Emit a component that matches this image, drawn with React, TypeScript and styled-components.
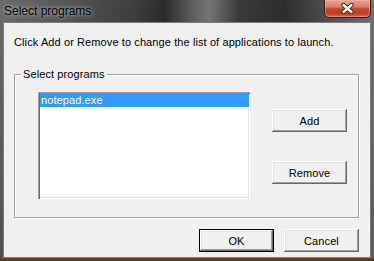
import styled, { createGlobalStyle } from 'styled-components';

const GlobalStyle = createGlobalStyle`
  html, body {
    margin: 0;
    padding: 0;
  }
  body {
    font-family: "Liberation Sans", Arial, sans-serif;
    background: #1c1c1c;
  }
  #root {
    width: 374px;
    height: 261px;
  }
`;

const Window = styled.div`
  width: 374px;
  height: 261px;
  box-sizing: border-box;
  padding: 0 3px 3px 3px;
  display: flex;
  flex-direction: column;
  background:
    linear-gradient(to top, #4a3414 0, #6b4c1f 3px, transparent 3px),
    linear-gradient(to bottom, rgba(255, 255, 255, 0.08), rgba(0, 0, 0, 0.15)),
    linear-gradient(90deg, #5e5e5e 0%, #474747 18%, #2e2e2e 36%, #1a1a1a 44%, #555 52%, #6a6a6a 56%, #2a2a2a 64%, #1c1c1c 76%, #3c3c3c 86%, #666 100%);
`;

const TitleBar = styled.div`
  height: 22px;
  display: flex;
  align-items: flex-start;
  justify-content: space-between;
`;

const Title = styled.span`
  padding-left: 1px;
  font-size: 12px;
  line-height: 23px;
  color: #000;
  text-shadow: 0 0 6px rgba(255, 255, 255, 0.55), 0 0 3px rgba(255, 255, 255, 0.45);
`;

const CloseButton = styled.div`
  width: 47px;
  height: 18px;
  box-sizing: border-box;
  display: flex;
  align-items: center;
  justify-content: center;
  border: 1px solid #3a1610;
  border-top: none;
  border-radius: 0 0 5px 5px;
  background: linear-gradient(to bottom, #e6a28f 0%, #d98068 40%, #c2482b 52%, #c03e22 78%, #d8664a 100%);
  box-shadow: inset 0 0 0 1px rgba(255, 190, 170, 0.45);
`;

const Client = styled.div`
  flex: 1;
  display: flex;
  flex-direction: column;
  padding: 0 11px 0 10px;
  background: #f0f0f0;
  border: 1px solid #7c7c7c;
  font-size: 11px;
  letter-spacing: 0.1px;
  color: #000;
`;

const Instruction = styled.div`
  margin-top: 13px;
  line-height: 13px;
  white-space: nowrap;
`;

const GroupBox = styled.fieldset`
  margin: 19px 0 0 0;
  padding: 11px 11px 18px 6px;
  min-width: 0;
  display: flex;
  border: 1px solid #a0a0a0;
  box-shadow: 1px 1px 0 #fff, inset 1px 1px 0 #fff;
`;

const GroupLabel = styled.legend`
  padding: 0 2px;
  line-height: 13px;
  background: #f0f0f0;
`;

const ListBox = styled.div`
  margin-left: 17px;
  width: 212px;
  height: 107px;
  box-sizing: border-box;
  padding: 1px 1px 0 2px;
  background: #fff;
  box-shadow: inset 1px 1px 0 #a0a0a0, inset 2px 2px 0 #696969, inset -1px -1px 0 #fff, inset -2px -2px 0 #e3e3e3;
`;

const ListItem = styled.div<{ $selected?: boolean }>`
  height: 14px;
  line-height: 14px;
  padding-left: 1px;
  background: ${(p) => (p.$selected ? '#3399ff' : 'transparent')};
  color: ${(p) => (p.$selected ? '#fff' : '#000')};
`;

const ButtonColumn = styled.div`
  display: flex;
  flex-direction: column;
  gap: 29px;
  margin-left: 22px;
  padding-top: 17px;
`;

const PushButton = styled.button<{ $default?: boolean }>`
  width: 75px;
  height: 23px;
  padding: 0;
  font-family: "Liberation Sans", Arial, sans-serif;
  font-size: 11px;
  letter-spacing: 0.1px;
  color: #000;
  background: #f0f0f0;
  border: ${(p) => (p.$default ? '1px solid #000' : 'none')};
  box-shadow: inset -1px -1px 0 #696969, inset 1px 1px 0 #fff, inset -2px -2px 0 #a0a0a0, inset 2px 2px 0 #e3e3e3;
`;

const Footer = styled.div`
  display: flex;
  justify-content: flex-end;
  gap: 10px;
  margin-top: 11px;
`;

const CloseIcon = () => (
  <svg width="13" height="11" viewBox="0 0 13 11">
    <path d="M2.5 2 L10.5 9 M10.5 2 L2.5 9" stroke="#3a1a12" strokeWidth="4.2" strokeLinecap="round" />
    <path d="M2.5 2 L10.5 9 M10.5 2 L2.5 9" stroke="#fff" strokeWidth="2.4" strokeLinecap="round" />
  </svg>
);

const App = () => {
  const programs = ['notepad.exe'];

  return (
    <Window>
      <GlobalStyle />
      <TitleBar>
        <Title>Select programs</Title>
        <CloseButton>
          <CloseIcon />
        </CloseButton>
      </TitleBar>
      <Client>
        <Instruction>Click Add or Remove to change the list of applications to launch.</Instruction>
        <GroupBox>
          <GroupLabel>Select programs</GroupLabel>
          <ListBox>
            {programs.map((p, i) => (
              <ListItem key={p} $selected={i === 0}>{p}</ListItem>
            ))}
          </ListBox>
          <ButtonColumn>
            <PushButton>Add</PushButton>
            <PushButton>Remove</PushButton>
          </ButtonColumn>
        </GroupBox>
        <Footer>
          <PushButton $default>OK</PushButton>
          <PushButton>Cancel</PushButton>
        </Footer>
      </Client>
    </Window>
  );
}
export default App;
